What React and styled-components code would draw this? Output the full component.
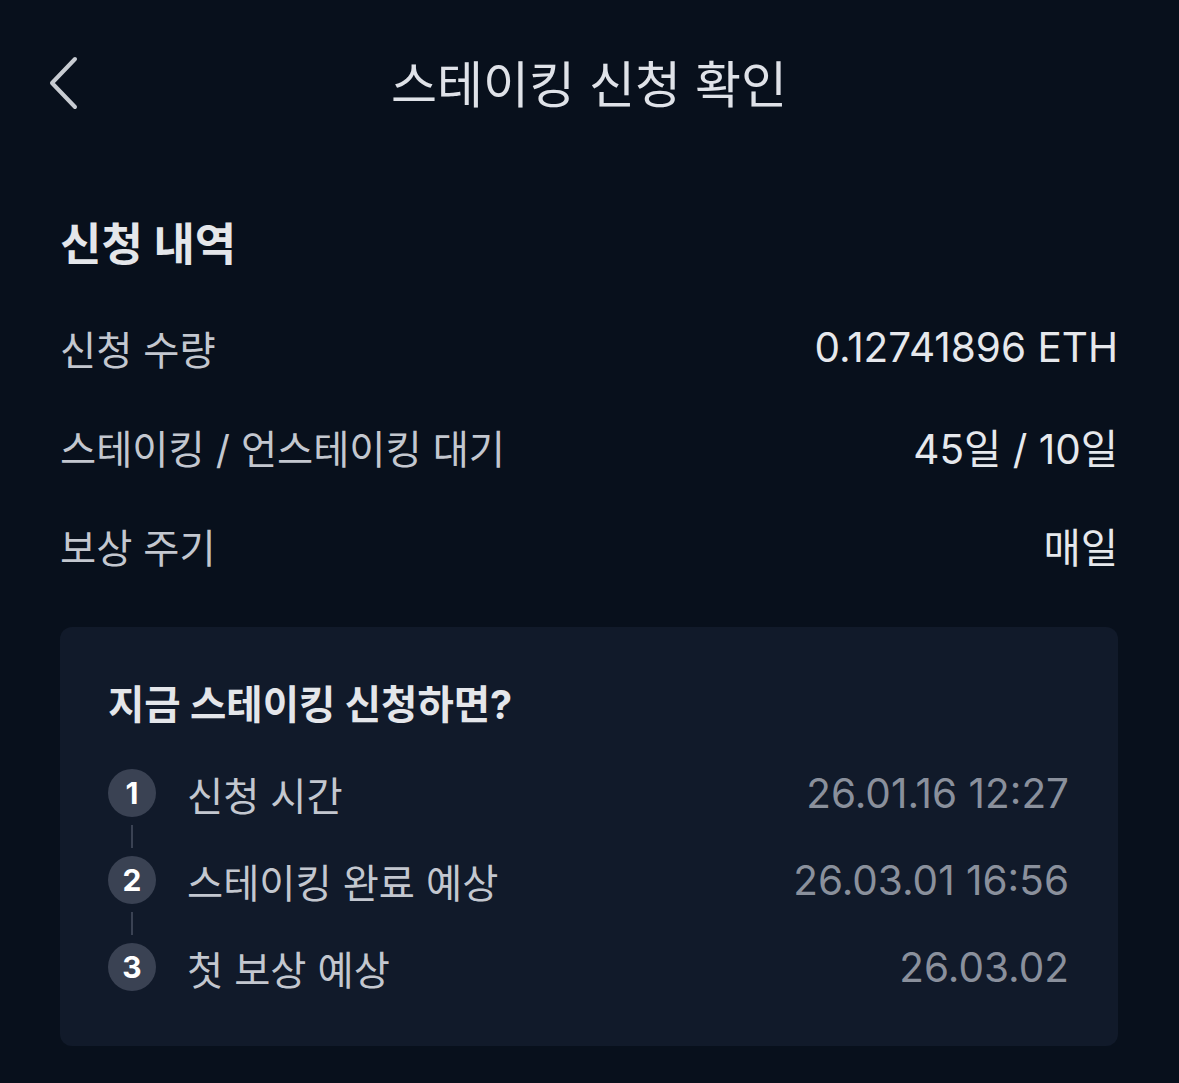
import React from "react";
import styled, { createGlobalStyle } from "styled-components";

const GlobalStyle = createGlobalStyle`
  html, body {
    margin: 0;
    padding: 0;
    background: #08101c;
  }
  body {
    font-family: Inter, "Noto Sans CJK KR", sans-serif;
    -webkit-font-smoothing: antialiased;
  }
`;

const Page = styled.div`
  width: 1179px;
  min-height: 1083px;
  background: #08101c;
  box-sizing: border-box;
  padding: 0 61px 0 60px;
`;

const Header = styled.header`
  height: 170px;
  display: flex;
  align-items: center;
  justify-content: center;
  position: relative;
`;

const BackButton = styled.button`
  position: absolute;
  left: -16px;
  top: 54px;
  width: 40px;
  height: 60px;
  padding: 0;
  border: none;
  background: none;
  display: flex;
  align-items: center;
  justify-content: center;
`;

const Title = styled.h1`
  margin: 0;
  font-size: 50px;
  font-weight: 400;
  color: #dfe2e8;
  line-height: 56px;
`;

const SectionTitle = styled.h2`
  margin: 47px 0 25px;
  font-size: 45px;
  font-weight: 700;
  color: #e4e6ea;
  line-height: 56px;
`;

const Row = styled.div`
  height: 99px;
  display: flex;
  align-items: center;
  justify-content: space-between;
  font-size: 39.3px;
`;

const Label = styled.span`
  color: #c3c7cf;
`;

const Value = styled.span`
  color: #e6e8ec;
  font-size: 40.5px;
`;

const Card = styled.section`
  margin-top: 32px;
  background: #111a2a;
  border-radius: 12px;
  padding: 53px 49px 55px 48px;
`;

const CardTitle = styled.h3`
  margin: 0 0 39px;
  font-size: 39.5px;
  font-weight: 700;
  color: #e4e6ea;
  line-height: 50px;
`;

const Step = styled.div`
  height: 48px;
  display: flex;
  align-items: center;
  font-size: 39.3px;
`;

const Circle = styled.div`
  width: 48px;
  height: 48px;
  border-radius: 50%;
  background: #3a4253;
  color: #ffffff;
  font-size: 30px;
  font-weight: 700;
  display: flex;
  align-items: center;
  justify-content: center;
  flex-shrink: 0;
`;

const StepLabel = styled.span`
  margin-left: 31px;
  color: #c3c7cf;
  flex: 1;
`;

const StepDate = styled.span`
  color: #8a909c;
  font-size: 40.5px;
`;

const Connector = styled.div`
  height: 39px;
  box-sizing: border-box;
  padding: 8px 0;
  display: flex;

  &::before {
    content: "";
    width: 2px;
    margin-left: 23px;
    background: #3a4253;
  }
`;

const rows = [
  { label: "신청 수량", value: "0.12741896 ETH" },
  { label: "스테이킹 / 언스테이킹 대기", value: "45일 / 10일" },
  { label: "보상 주기", value: "매일" },
];

const steps = [
  { label: "신청 시간", date: "26.01.16 12:27" },
  { label: "스테이킹 완료 예상", date: "26.03.01 16:56" },
  { label: "첫 보상 예상", date: "26.03.02" },
];

const ChevronLeft = () => (
  <svg width="34" height="58" viewBox="0 0 34 58" fill="none">
    <path
      d="M28 4 L5 28 L28 52"
      stroke="#c8ccd2"
      strokeWidth="4"
      strokeLinecap="round"
      strokeLinejoin="round"
    />
  </svg>
);

const App = () => (
  <Page>
    <GlobalStyle />
    <Header>
      <BackButton aria-label="뒤로">
        <ChevronLeft />
      </BackButton>
      <Title>스테이킹 신청 확인</Title>
    </Header>

    <SectionTitle>신청 내역</SectionTitle>
    {rows.map((r) => (
      <Row key={r.label}>
        <Label>{r.label}</Label>
        <Value>{r.value}</Value>
      </Row>
    ))}

    <Card>
      <CardTitle>지금 스테이킹 신청하면?</CardTitle>
      {steps.map((s, i) => (
        <React.Fragment key={s.label}>
          {i > 0 && <Connector />}
          <Step>
            <Circle>{i + 1}</Circle>
            <StepLabel>{s.label}</StepLabel>
            <StepDate>{s.date}</StepDate>
          </Step>
        </React.Fragment>
      ))}
    </Card>
  </Page>
);

export default App;
